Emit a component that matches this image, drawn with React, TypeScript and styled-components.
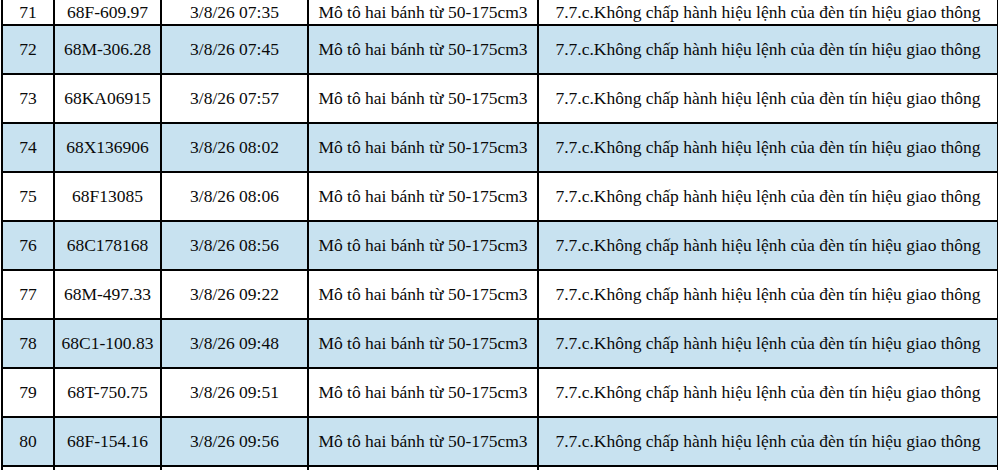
import React from "react";
import styled, { createGlobalStyle } from "styled-components";

const Global = createGlobalStyle`
  html, body { margin: 0; padding: 0; background: #ffffff; overflow: hidden; }
  body { font-family: "Liberation Serif", "Times New Roman", serif; }
`;

const Table = styled.table`
  border-collapse: collapse;
  table-layout: fixed;
  width: 996px;
  margin-left: 1px;
  font-family: "Liberation Serif", "Times New Roman", serif;
  font-size: 17.5px;
  color: #0a0a0a;
`;

const Row = styled.tr<{ $shaded: boolean; $h: number }>`
  height: ${(p) => p.$h}px;
  background: ${(p) => (p.$shaded ? "#c8e2f0" : "#ffffff")};
`;

const Cell = styled.td<{ $first?: boolean }>`
  border: 2px solid #000;
  border-top: ${(p) => (p.$first ? "none" : "2px solid #000")};
  text-align: center;
  vertical-align: middle;
  padding: 0;
  white-space: nowrap;
  overflow: hidden;
`;

const cols = [52, 107, 147, 230, 460];

const rows = [
  ["71", "68F-609.97", "3/8/26 07:35"],
  ["72", "68M-306.28", "3/8/26 07:45"],
  ["73", "68KA06915", "3/8/26 07:57"],
  ["74", "68X136906", "3/8/26 08:02"],
  ["75", "68F13085", "3/8/26 08:06"],
  ["76", "68C178168", "3/8/26 08:56"],
  ["77", "68M-497.33", "3/8/26 09:22"],
  ["78", "68C1-100.83", "3/8/26 09:48"],
  ["79", "68T-750.75", "3/8/26 09:51"],
  ["80", "68F-154.16", "3/8/26 09:56"],
];

const vehicle = "Mô tô hai bánh từ 50-175cm3";
const violation = "7.7.c.Không chấp hành hiệu lệnh của đèn tín hiệu giao thông";

export default function App() {
  return (
    <>
      <Global />
      <Table>
        <colgroup>
          {cols.map((w, i) => (
            <col key={i} style={{ width: w }} />
          ))}
        </colgroup>
        <tbody>
          {rows.map((r, i) => (
            <Row key={r[0]} $shaded={i % 2 === 1} $h={i === 0 ? 25 : 49}>
              <Cell $first={i === 0}>{r[0]}</Cell>
              <Cell $first={i === 0}>{r[1]}</Cell>
              <Cell $first={i === 0}>{r[2]}</Cell>
              <Cell $first={i === 0}>{vehicle}</Cell>
              <Cell $first={i === 0}>{violation}</Cell>
            </Row>
          ))}
          <Row $shaded={false} $h={20}>
            <Cell />
            <Cell />
            <Cell />
            <Cell />
            <Cell />
          </Row>
        </tbody>
      </Table>
    </>
  );
}
